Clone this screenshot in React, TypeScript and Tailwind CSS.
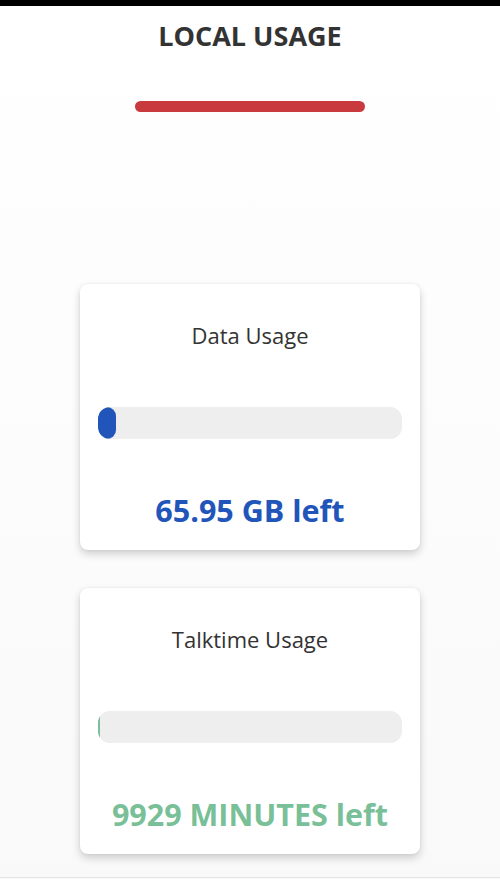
const font = { fontFamily: '"Open Sans", "Noto Sans", sans-serif' }

type UsageCardProps = {
  title: string
  value: string
  percent: number
  barClass: string
  textClass: string
}

function UsageCard({ title, value, percent, barClass, textClass }: UsageCardProps) {
  return (
    <div className="w-[340px] h-[266px] bg-white rounded-lg shadow-[0_4px_8px_rgba(0,0,0,0.18),0_0_3px_rgba(0,0,0,0.06)] flex flex-col px-[18px] pt-[37px]">
      <p className="text-center text-[22px] leading-[28px] text-[#333333]">{title}</p>
      <div className="mt-[58px] h-[32px] w-full rounded-[12px] bg-[#eeeeee] overflow-hidden">
        <div className={`h-full rounded-[12px] ${barClass}`} style={{ width: `${percent}%` }} />
      </div>
      <p className={`mt-[51px] text-center text-[30.5px] leading-[40px] font-bold ${textClass}`}>{value}</p>
    </div>
  )
}

export default function App() {
  return (
    <div
      className="relative min-h-[879px] w-full flex flex-col items-center bg-gradient-to-b from-white to-[#f9f9f9]"
      style={font}
    >
      <div className="h-[6px] w-full bg-black" />
      <h1 className="mt-[15px] text-[27px] leading-[30px] font-bold text-[#333333]">LOCAL USAGE</h1>
      <div className="mt-[50px] h-[11px] w-[230px] rounded-full bg-[#c93a3f]" />

      <div className="mt-[172px] flex flex-col items-center gap-[38px]">
        <UsageCard
          title="Data Usage"
          value="65.95 GB left"
          percent={6}
          barClass="bg-[#2155b9]"
          textClass="text-[#2155b9]"
        />
        <UsageCard
          title="Talktime Usage"
          value="9929 MINUTES left"
          percent={0.8}
          barClass="bg-[#79bf98]"
          textClass="text-[#79bf98]"
        />
      </div>

      <div className="absolute bottom-[1px] left-0 w-full h-[1px] bg-[#e4e4e4]" />
    </div>
  )
}
